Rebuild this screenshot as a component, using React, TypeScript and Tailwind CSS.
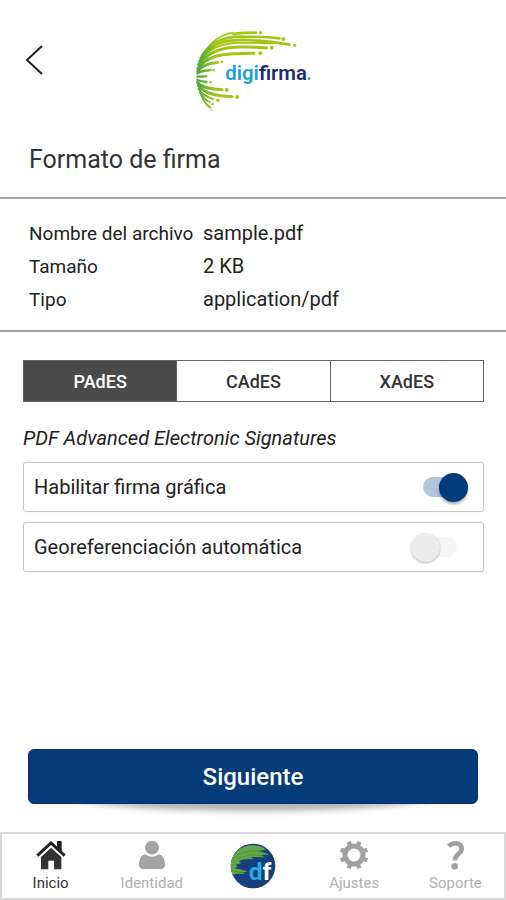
import { useState, type ReactNode } from "react";

const LIME = "#a3c614";

function BrandLogo() {
  return (
    <svg viewBox="-6 0 450 300" className="h-[100px] w-[150px]" role="img" aria-label="digifirma">
      <defs>
        <linearGradient id="leaf" gradientUnits="userSpaceOnUse" x1="50" y1="0" x2="110" y2="0">
          <stop offset="0" stopColor="#45a63c" />
          <stop offset="1" stopColor={LIME} />
        </linearGradient>
      </defs>
      <g fill="none" stroke="url(#leaf)" strokeLinecap="round">
        <path d="M72 100C95 62 125 44 158 38" strokeWidth="5" />
        <path d="M160 42C185 38 205 38 228 38" strokeWidth="8" />
        <path d="M66 108C95 62 140 48 190 50C235 50 268 51 298 55" strokeWidth="8" />
        <path d="M62 116C95 68 140 58 200 60C250 62 290 66 328 74" strokeWidth="8" />
        <path d="M58 124C90 78 135 68 180 68C230 68 270 68 312 71" strokeWidth="6" />
        <path d="M56 134C88 92 130 82 180 81C210 80 235 82 260 84" strokeWidth="9" />
        <path d="M54 146C80 110 120 103 160 101L222 100" strokeWidth="9" />
        <path d="M53 153C68 134 90 130 114 127" strokeWidth="8" />
        <path d="M52 160C64 153 76 151 92 150" strokeWidth="7" />
        <path d="M52 170L78 169" strokeWidth="7" />
        <path d="M52 180C62 184 70 185 80 186" strokeWidth="7" />
        <path d="M53 188C68 204 95 206 126 209" strokeWidth="9" />
        <path d="M55 196C75 222 112 228 156 230" strokeWidth="9" />
        <path d="M56 206C68 226 82 232 100 237" strokeWidth="6" />
        <path d="M59 216C68 232 76 240 90 247" strokeWidth="5" />
        <path d="M63 226C72 244 80 254 92 262" strokeWidth="4" />
        <path d="M68 238C76 252 84 262 96 271" strokeWidth="3" />
      </g>
      <g fill={LIME}>
        <circle cx="242" cy="38" r="5" />
        <circle cx="310" cy="57" r="6" />
        <circle cx="344" cy="76" r="5" />
        <circle cx="275" cy="83" r="6" />
        <circle cx="241" cy="100" r="6" />
        <circle cx="126" cy="126" r="4" />
        <circle cx="101" cy="150" r="4" />
        <circle cx="92" cy="187" r="4" />
        <circle cx="140" cy="210" r="6" />
        <circle cx="172" cy="231" r="6" />
        <circle cx="114" cy="241" r="5" />
        <circle cx="98" cy="252" r="4" />
      </g>
      <text x="136" y="181" className="font-[Roboto,sans-serif] text-[61px] font-semibold">
        <tspan fill="#1ea0dc">digi</tspan>
        <tspan fill="#1c2a72">firma</tspan>
      </text>
      <circle cx="387" cy="176" r="4" fill="#3b8ccb" />
    </svg>
  );
}

function BrandBadge() {
  return (
    <svg viewBox="0 0 138 138" className="size-[46px]" aria-hidden="true">
      <defs>
        <clipPath id="disc">
          <circle cx="69" cy="69" r="67" />
        </clipPath>
      </defs>
      <circle cx="69" cy="69" r="67" fill="#173f7c" />
      <g clipPath="url(#disc)">
        <path d="M22 24C44 2 88 2 108 20L84 24L118 34L92 37L106 43L62 42L72 48L42 49L26 55L34 60L16 65L24 70L14 76L40 81L52 86L36 89L46 94L20 92L4 96L0 50Z" fill="#62a744" />
        <g fill="none" stroke="#3c8a48" strokeWidth="2">
          <path d="M8 52C28 26 60 18 100 26" />
          <path d="M10 62C30 38 60 32 98 38" />
          <path d="M8 82C20 88 30 88 42 90" />
        </g>
      </g>
      <text x="56" y="110" className="font-[Roboto,sans-serif] text-[74px] font-bold">
        <tspan fill="#2aaae2">d</tspan>
        <tspan fill="#ffffff">f</tspan>
      </text>
    </svg>
  );
}

function HomeIcon() {
  return (
    <svg viewBox="0 0 90 90" className="size-[30px]" aria-hidden="true">
      <path d="M63 3H77V34L63 22Z" fill="#222" />
      <path d="M4 47L45 9L86 47" fill="none" stroke="#222" strokeWidth="9" />
      <path d="M15 51L45 23L76 51V88H54V62H37V88H15Z" fill="#333" />
    </svg>
  );
}

function PersonIcon() {
  return (
    <svg viewBox="0 0 90 90" className="size-[30px]" fill="#a3a3a3" aria-hidden="true">
      <circle cx="45" cy="23" r="21" />
      <path d="M25 43C38 53 52 53 65 43C78 46 84 58 84 76C84 83 79 87 72 87H18C11 87 6 83 6 76C6 58 12 46 25 43Z" />
    </svg>
  );
}

function GearIcon() {
  return (
    <svg viewBox="-45 -45 90 90" className="size-[30px]" fill="none" stroke="#a0a0a0" aria-hidden="true">
      <circle r="27" strokeWidth="15" />
      <path
        d="M-11 -27L-16 -40M11 -27L16 -40M27 -11L40 -16M27 11L40 16M11 27L16 40M-11 27L-16 40M-27 11L-40 16M-27 -11L-40 -16"
        strokeWidth="13"
      />
    </svg>
  );
}

function QuestionIcon() {
  return (
    <svg viewBox="0 0 90 90" className="size-[30px]" aria-hidden="true">
      <path d="M25 18C42 5 65 8 65 26C65 42 44 42 45 61" fill="none" stroke="#a0a0a0" strokeWidth="14" />
      <circle cx="44" cy="79" r="10" fill="#a0a0a0" />
    </svg>
  );
}

const fileInfo = [
  ["Nombre del archivo", "sample.pdf"],
  ["Tamaño", "2 KB"],
  ["Tipo", "application/pdf"],
];

const formats = ["PAdES", "CAdES", "XAdES"];

function ToggleRow({ id, label, initial }: { id: string; label: string; initial: boolean }) {
  const [on, setOn] = useState(initial);
  return (
    <div className="flex h-[50px] items-center justify-between rounded-[3px] border border-[#c6c6c6] pr-[14px] pl-[10px] shadow-[0_0_1px_rgba(0,0,0,0.2)]">
      <label htmlFor={id} className="text-[20px] leading-6">
        {label}
      </label>
      <span className="relative flex h-[30px] w-[58px] items-center">
        <input
          id={id}
          type="checkbox"
          role="switch"
          checked={on}
          onChange={(e) => setOn(e.target.checked)}
          className="peer ml-3 h-5 w-[34px] appearance-none rounded-full bg-[#f5f5f5] checked:bg-[#b0c4da]"
        />
        <span className="pointer-events-none absolute left-0 size-[29px] rounded-full bg-[#ececec] shadow-[0_1px_2px_rgba(0,0,0,0.3)] peer-checked:left-[28px] peer-checked:bg-[#043b7c] peer-checked:shadow-[0_2px_3px_rgba(0,0,0,0.35)]" />
      </span>
    </div>
  );
}

function NavItem({ label, active, children }: { label: string; active?: boolean; children: ReactNode }) {
  return (
    <a
      href="#"
      className={`flex flex-1 flex-col items-center pt-2 text-[15px] leading-5 ${active ? "text-[#333]" : "text-[#b0b0b0]"}`}
    >
      {children}
      <span className="pt-[3px]">{label}</span>
    </a>
  );
}

export default function App() {
  const [format, setFormat] = useState("PAdES");
  return (
    <div className="flex min-h-screen flex-col bg-white font-[Roboto,sans-serif] text-[#222]">
      <header className="grid grid-cols-[1fr_auto_1fr] items-center pt-5">
        <button type="button" aria-label="Volver" className="ml-[25px] w-[18px] pb-5">
          <svg viewBox="0 0 18 32" className="h-8 w-[18px]" fill="none" stroke="#222" strokeWidth="2">
            <path d="M17 2L2 16L17 30" />
          </svg>
        </button>
        <BrandLogo />
      </header>

      <h1 className="px-[29px] pt-6 pb-[21px] text-[25px] leading-8 text-[#333]">Formato de firma</h1>

      <dl className="flex flex-col border-y-2 border-[#a3a3a3] px-[29px] pt-[18px] pb-[14px] text-[20px] leading-8">
        {fileInfo.map(([name, value]) => (
          <div key={name} className="flex items-baseline">
            <dt className="w-[174px] text-[19px] whitespace-nowrap">{name}</dt>
            <dd>{value}</dd>
          </div>
        ))}
      </dl>

      <main className="flex flex-col pt-7 pr-[22px] pl-[23px]">
        <div role="tablist" className="flex h-[42px] divide-x divide-[#666] border border-[#666]">
          {formats.map((f) => (
            <button
              key={f}
              type="button"
              role="tab"
              aria-selected={f === format}
              onClick={() => setFormat(f)}
              className={`flex-1 text-[18px] font-medium ${f === format ? "bg-[#4a4a4a] text-white" : "bg-white text-[#333]"}`}
            >
              {f}
            </button>
          ))}
        </div>
        <p className="pt-[22px] pb-[10px] text-[20px] leading-7 italic">PDF Advanced Electronic Signatures</p>
        <div className="flex flex-col gap-[10px]">
          <ToggleRow id="firma" label="Habilitar firma gráfica" initial />
          <ToggleRow id="geo" label="Georeferenciación automática" initial={false} />
        </div>
      </main>

      <div className="relative mt-auto px-7 pb-7">
        <span className="absolute inset-x-16 top-7 h-[34px] rounded-[50%] bg-black/30 blur-[3px]" />
        <button
          type="button"
          className="relative h-[55px] w-full rounded-md border border-[#0a2c72] bg-[#043b78] text-[24px] font-medium text-white"
        >
          Siguiente
        </button>
      </div>

      <nav className="flex h-[68px] shadow-[inset_0_0_0_2px_#d9d9d9]">
        <NavItem label="Inicio" active>
          <HomeIcon />
        </NavItem>
        <NavItem label="Identidad">
          <PersonIcon />
        </NavItem>
        <a href="#" aria-label="Digifirma" className="flex flex-1 items-center justify-center">
          <BrandBadge />
        </a>
        <NavItem label="Ajustes">
          <GearIcon />
        </NavItem>
        <NavItem label="Soporte">
          <QuestionIcon />
        </NavItem>
      </nav>
    </div>
  );
}
